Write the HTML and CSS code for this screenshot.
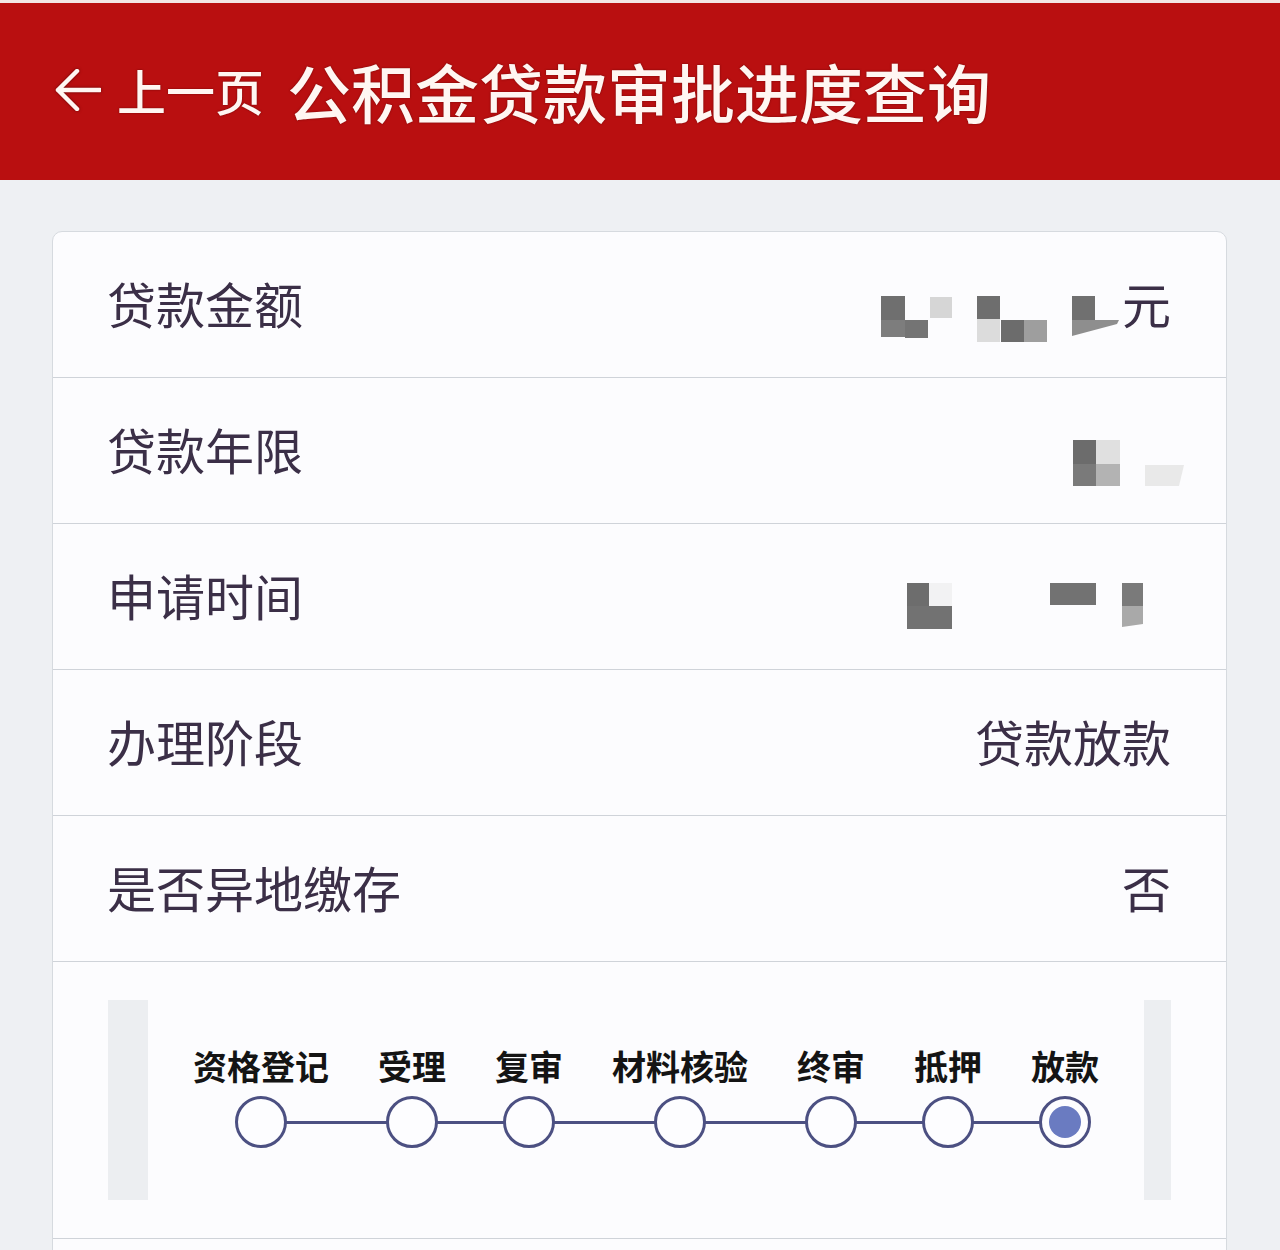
FILE: index.html
```html
<!DOCTYPE html>
<html lang="zh-CN">
<head>
  <meta charset="UTF-8">
  <meta name="viewport" content="width=device-width, initial-scale=1.0">
  <title>公积金贷款审批进度查询</title>
  <link rel="stylesheet" href="styles.css">
</head>
<body>
  <div class="topbar">
    <a class="back" href="#">
      <svg class="back-arrow" width="46" height="42" viewBox="0 0 46 42">
        <path d="M22 2 L3 21 L22 40 M3 21 H45" fill="none" stroke="#fff6f2" stroke-width="4.5" stroke-linecap="round" stroke-linejoin="round"/>
      </svg>
      <span>上一页</span>
    </a>
    <h1 class="title">公积金贷款审批进度查询</h1>
  </div>

  <div class="card">
    <div class="info-row">
      <span class="label">贷款金额</span>
      <span class="value">
        <!-- 打码部分 -->
        <svg class="mosaic" width="241" height="78" viewBox="0 0 241 78">
          <rect x="0" y="30" width="24" height="24" fill="#6f6f6f"/>
          <rect x="0" y="54" width="24" height="17" fill="#7d7d7d"/>
          <rect x="24" y="54" width="23" height="18" fill="#747474"/>
          <rect x="49" y="31" width="22" height="21" fill="#d6d6d6"/>
          <rect x="96" y="30" width="23" height="23" fill="#6e6e6e"/>
          <rect x="96" y="53" width="23" height="23" fill="#dcdcdc"/>
          <rect x="120" y="54" width="23" height="22" fill="#6c6c6c"/>
          <rect x="143" y="54" width="23" height="22" fill="#9e9e9e"/>
          <rect x="191" y="30" width="23" height="24" fill="#707070"/>
          <polygon points="191,54 238,54 236,58 191,70" fill="#8e8e8e"/>
        </svg>元
      </span>
    </div>
    <div class="info-row">
      <span class="label">贷款年限</span>
      <span class="value">
        <svg class="mosaic shift-a" width="112" height="78" viewBox="0 0 112 78">
          <rect x="0" y="28" width="23" height="24" fill="#6c6c6c"/>
          <rect x="23" y="28" width="24" height="24" fill="#e0e0e0"/>
          <rect x="0" y="52" width="23" height="22" fill="#7a7a7a"/>
          <rect x="23" y="52" width="24" height="22" fill="#b3b3b3"/>
          <polygon points="72,53 111,53 106,74 72,74" fill="#e9e9e9"/>
        </svg>
      </span>
    </div>
    <div class="info-row">
      <span class="label">申请时间</span>
      <span class="value">
        <svg class="mosaic shift-b" width="236" height="78" viewBox="0 0 236 78">
          <rect x="0" y="25" width="22" height="23" fill="#6d6d6d"/>
          <rect x="22" y="25" width="23" height="23" fill="#f2f2f3"/>
          <rect x="0" y="48" width="45" height="23" fill="#727272"/>
          <rect x="143" y="25" width="46" height="22" fill="#727272"/>
          <rect x="215" y="25" width="21" height="23" fill="#7a7a7a"/>
          <polygon points="215,48 236,48 236,66 215,69" fill="#a9a9a9"/>
        </svg>
      </span>
    </div>
    <div class="info-row">
      <span class="label">办理阶段</span>
      <span class="value">贷款放款</span>
    </div>
    <div class="info-row">
      <span class="label">是否异地缴存</span>
      <span class="value">否</span>
    </div>

    <div class="progress">
      <div class="side side-left"></div>
      <div class="steps-wrap">
        <div class="steps">
          <div class="step"><span class="step-name">资格登记</span><span class="dot"></span></div>
          <div class="step"><span class="step-name">受理</span><span class="dot"></span></div>
          <div class="step"><span class="step-name">复审</span><span class="dot"></span></div>
          <div class="step"><span class="step-name">材料核验</span><span class="dot"></span></div>
          <div class="step"><span class="step-name">终审</span><span class="dot"></span></div>
          <div class="step"><span class="step-name">抵押</span><span class="dot"></span></div>
          <div class="step current"><span class="step-name">放款</span><span class="dot"></span></div>
        </div>
      </div>
      <div class="side side-right"></div>
    </div>

    <div class="info-row empty"></div>
  </div>
</body>
</html>
```

FILE: styles.css
```css
body {
  margin: 0;
  font-family: "Noto Sans CJK SC", "Noto Sans", sans-serif;
  background-color: #eef0f3;
  border-top: 3px solid #f3e6e4;
}

.topbar {
  height: 177px;
  background-color: #b90f10;
  display: flex;
  align-items: center;
  padding-left: 55px;
  box-sizing: border-box;
  color: #fff6f2;
  text-shadow: 0 0 2px rgba(70, 0, 0, 0.7);
}

.back {
  display: flex;
  align-items: center;
  gap: 16px;
  color: inherit;
  text-decoration: none;
  font-size: 49px;
  font-weight: 500;
  margin-top: -4px;
}

.back-arrow {
  filter: drop-shadow(0 0 1.5px rgba(70, 0, 0, 0.7));
}

.title {
  margin: -4px 0 0 23px;
  font-size: 64px;
  font-weight: 500;
}

.card {
  margin: 51px 53px 0 52px;
  background-color: #fcfcfe;
  border: 1px solid #d6dadf;
  border-radius: 10px 10px 0 0;
}

.info-row {
  height: 145px;
  border-bottom: 1px solid #cfd3d9;
  display: flex;
  align-items: center;
  justify-content: space-between;
  padding: 0 55px 0 54px;
  font-size: 49px;
  color: #3b2f47;
}

.label,
.value {
  margin-top: -4px;
}

.info-row.empty {
  border-bottom: none;
}

.value {
  display: flex;
  align-items: center;
}

.mosaic {
  display: block;
  margin-top: 4px;
}

.mosaic.shift-a {
  margin-right: -14px;
}

.mosaic.shift-b {
  margin-right: 28px;
}

.progress {
  height: 276px;
  border-bottom: 1px solid #cfd3d9;
  display: flex;
  align-items: center;
  padding: 0 55px;
}

.side {
  height: 200px;
  background-color: #eceef1;
}

.side-left {
  width: 40px;
}

.side-right {
  width: 27px;
}

.steps-wrap {
  flex: 1;
  display: flex;
  justify-content: center;
  margin-top: -6px;
}

.steps {
  position: relative;
  display: flex;
  gap: 49px;
}

/* 连接线 */
.steps::before {
  content: "";
  position: absolute;
  left: 68px;
  right: 34px;
  top: 75px;
  height: 3px;
  background-color: #4c5082;
}

.step {
  display: flex;
  flex-direction: column;
  align-items: center;
  gap: 10px;
}

.step-name {
  font-size: 34px;
  line-height: 40px;
  font-weight: 700;
  color: #141414;
}

.dot {
  position: relative;
  width: 52px;
  height: 52px;
  box-sizing: border-box;
  border: 3px solid #4c5082;
  border-radius: 50%;
  background-color: #fdfdff;
}

.step.current .dot::after {
  content: "";
  position: absolute;
  left: 7px;
  top: 7px;
  width: 32px;
  height: 32px;
  border-radius: 50%;
  background-color: #6a7bc1;
}
```
